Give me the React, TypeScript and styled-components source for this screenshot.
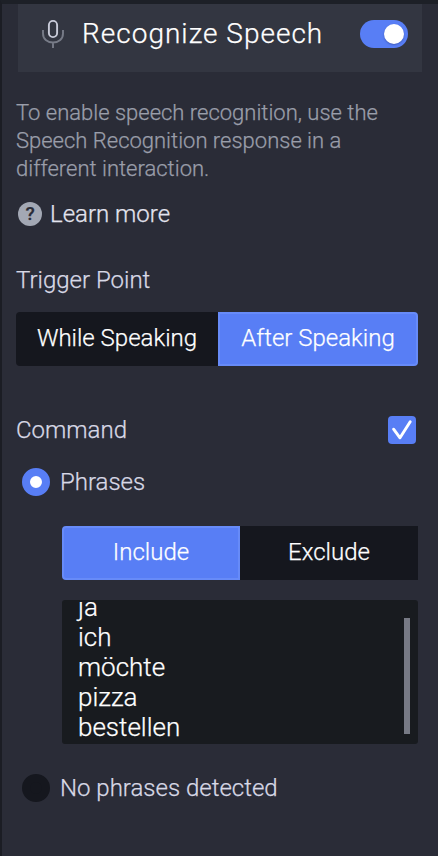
import React from "react";
import styled, { createGlobalStyle } from "styled-components";

const GlobalStyle = createGlobalStyle`
  * { box-sizing: border-box; }
  body { margin: 0; background: #2a2c37; }
`;

const Panel = styled.main`
  width: 438px;
  height: 856px;
  overflow: hidden;
  background: #2a2c37;
  border-left: 2px solid #1b1d24;
  border-top: 4px solid #1d2027;
  font-family: Roboto, sans-serif;
  font-weight: 300;
  font-size: 24px;
  -webkit-text-stroke: 0.25px currentColor;
  color: #d8d9e6;
  padding: 0 20px 0 14px;
`;

const Header = styled.header`
  display: flex;
  align-items: center;
  width: 404px;
  height: 68px;
  margin-left: 2px;
  padding: 0 14px 8px 22px;
  background: #333641;
`;

const Title = styled.h1`
  flex: 1;
  margin: 0 0 0 17px;
  font-size: 28px;
  line-height: 34px;
  font-weight: 300;
  letter-spacing: 1px;
  white-space: nowrap;
  color: #fff;
`;

const Toggle = styled.button`
  display: flex;
  justify-content: flex-end;
  align-items: center;
  width: 48px;
  height: 28px;
  padding: 0 4px;
  border: 0;
  border-radius: 14px;
  background: #587ef5;
`;

const Knob = styled.span`
  width: 20px;
  height: 20px;
  border-radius: 50%;
  background: #fff;
  box-shadow: 0 1px 2px rgba(20, 30, 80, 0.35);
`;

const Intro = styled.p`
  margin: 27px 0 0;
  font-size: 22px;
  line-height: 28px;
  color: #9a9eaa;
`;

const Line = styled.span`
  display: block;
  white-space: nowrap;
`;

const Learn = styled.a`
  display: flex;
  align-items: center;
  gap: 8px;
  height: 30px;
  margin: 16px 0 0 2px;
  color: #e3e4ef;
`;

const Help = styled.span`
  display: grid;
  place-items: center;
  width: 24px;
  height: 24px;
  border-radius: 50%;
  background: #a3a8b4;
  color: #2a2c37;
  font-size: 19px;
  font-weight: 500;
  line-height: 24px;
`;

const Label = styled.span`
  line-height: 30px;
  white-space: nowrap;
`;

const SectionRow = styled.div<{ $top: number }>`
  display: flex;
  justify-content: space-between;
  align-items: center;
  width: 400px;
  height: 30px;
  margin-top: ${(p) => p.$top}px;
`;

const Segments = styled.div<{ $columns: string; $indent?: number; $top: number }>`
  display: grid;
  grid-template-columns: ${(p) => p.$columns};
  width: max-content;
  height: 54px;
  margin: ${(p) => p.$top}px 0 0 ${(p) => p.$indent ?? 0}px;
`;

const Segment = styled.button<{ $active?: boolean; $radius: string }>`
  display: flex;
  align-items: center;
  justify-content: center;
  padding: 0 0 2px;
  border: 2px solid ${(p) => (p.$active ? "#678bf8" : "#15171e")};
  border-radius: ${(p) => p.$radius};
  background: ${(p) => (p.$active ? "#587ef5" : "#15171e")};
  color: #fff;
  font: inherit;
`;

const Check = styled.span`
  width: 28px;
  height: 28px;
  border-radius: 4px;
  background: #587ef5;
`;

const Option = styled.label<{ $top: number }>`
  display: flex;
  align-items: center;
  gap: 10px;
  height: 28px;
  margin: ${(p) => p.$top}px 0 0 6px;
`;

const Radio = styled.span<{ $checked?: boolean }>`
  width: 28px;
  height: 28px;
  border-radius: 50%;
  border: 8px solid ${(p) => (p.$checked ? "#587ef5" : "#15171e")};
  background: ${(p) => (p.$checked ? "#fff" : "#15171e")};
`;

const PhraseBox = styled.div`
  display: flex;
  justify-content: space-between;
  width: 356px;
  height: 144px;
  margin: 20px 0 0 46px;
  padding: 0 6px 0 14px;
  border: 2px solid #181b1f;
  border-radius: 3px;
  background: #181b1f;
  overflow: hidden;
`;

const PhraseList = styled.ul`
  margin: -10px 0 0;
  padding: 0;
  list-style: none;
  font-size: 26px;
  line-height: 30px;
  color: #fff;
`;

const ScrollThumb = styled.span`
  width: 6px;
  height: 116px;
  margin-top: 16px;
  background: #777a85;
`;

const MicIcon = () => (
  <svg width="25" height="30" viewBox="0 0 25 30" fill="none">
    <rect x="8.9" y="1.9" width="8.2" height="16.2" rx="4.1" stroke="#c9cbd9" strokeWidth="1.9" />
    <path d="M3 11v3.5c0 5.5 4 9 10 9s10-3.500 10-9V11M13 23.500V29" stroke="#777b87" strokeWidth="1.9" />
  </svg>
);

const Tick = () => (
  <svg width="28" height="28" viewBox="0 0 28 28" fill="none">
    <path d="M5.600 13.200L12 21.800L22.200 5.800" stroke="#fff" strokeWidth="2.900" strokeLinecap="round" strokeLinejoin="round" />
  </svg>
);

const phrases = ["ja", "ich", "möchte", "pizza", "bestellen"];

export default function App() {
  return (
    <>
      <GlobalStyle />
      <Panel>
        <Header>
          <MicIcon />
          <Title>Recognize Speech</Title>
          <Toggle aria-label="Recognize Speech"><Knob /></Toggle>
        </Header>
        <Intro>
          <Line>To enable speech recognition, use the</Line>
          <Line>Speech Recognition response in a</Line>
          <Line>different interaction.</Line>
        </Intro>
        <Learn>
          <Help>?</Help>
          <Label>Learn more</Label>
        </Learn>
        <SectionRow $top={36}><Label>Trigger Point</Label></SectionRow>
        <Segments $columns="202px 200px" $top={17}>
          <Segment $radius="4px 0 0 4px"><Label>While Speaking</Label></Segment>
          <Segment $radius="0 4px 4px 0" $active><Label>After Speaking</Label></Segment>
        </Segments>
        <SectionRow $top={49}>
          <Label>Command</Label>
          <Check><Tick /></Check>
        </SectionRow>
        <Option $top={23}><Radio $checked /><Label>Phrases</Label></Option>
        <Segments $columns="178px 178px" $indent={46} $top={30}>
          <Segment $radius="4px 0 0 4px" $active><Label>Include</Label></Segment>
          <Segment $radius="0"><Label>Exclude</Label></Segment>
        </Segments>
        <PhraseBox>
          <PhraseList>
            {phrases.map((phrase) => <li key={phrase}>{phrase}</li>)}
          </PhraseList>
          <ScrollThumb />
        </PhraseBox>
        <Option $top={30}><Radio /><Label>No phrases detected</Label></Option>
      </Panel>
    </>
  );
}
